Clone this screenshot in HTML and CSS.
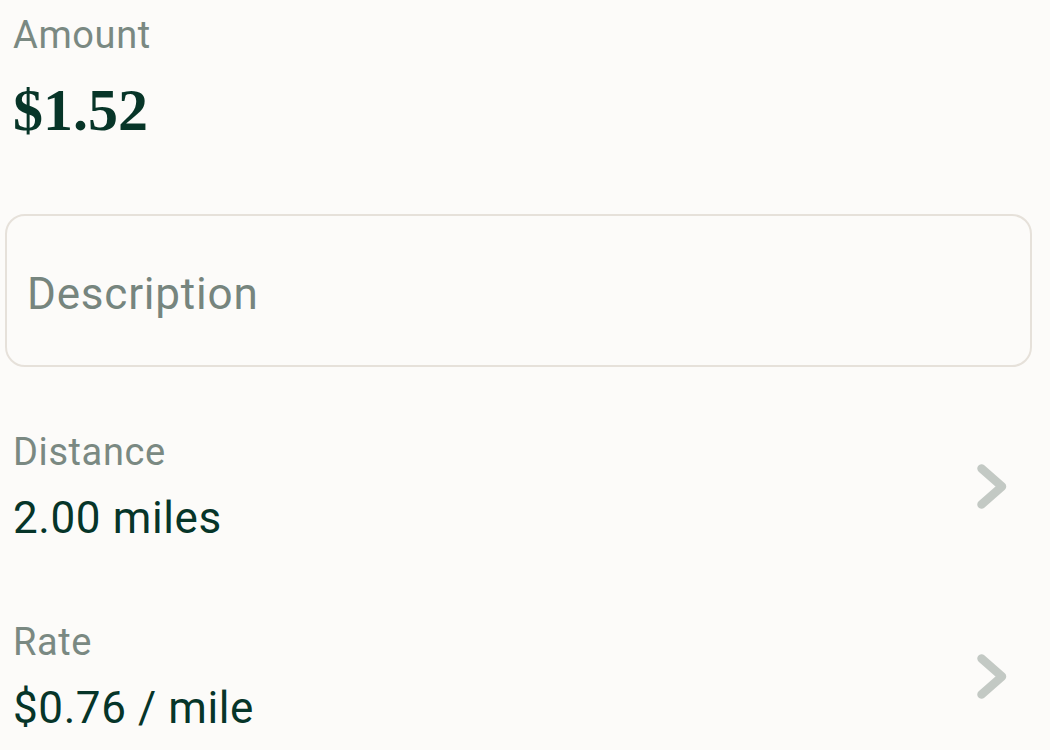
FILE: index.html
```html
<!DOCTYPE html>
<html>
<head>
<meta charset="utf-8">
<link rel="stylesheet" href="styles.css">
</head>
<body>
<main class="page">
  <section class="amount">
    <div class="label">Amount</div>
    <div class="amount-value">$1.52</div>
  </section>
  <div class="input-box">
    <span class="placeholder">Description</span>
  </div>
  <div class="row row-first">
    <div class="row-text">
      <div class="label">Distance</div>
      <div class="value">2.00 miles</div>
    </div>
    <svg class="chevron" width="30" height="46" viewBox="0 0 30 46"><polyline points="4.5,4.5 25,22.5 4.5,40.5" fill="none" stroke="#c3c9c4" stroke-width="8.5" stroke-linecap="round" stroke-linejoin="round"/></svg>
  </div>
  <div class="row row-second">
    <div class="row-text">
      <div class="label">Rate</div>
      <div class="value">$0.76 / mile</div>
    </div>
    <svg class="chevron" width="30" height="46" viewBox="0 0 30 46"><polyline points="4.5,4.5 25,22.5 4.5,40.5" fill="none" stroke="#c3c9c4" stroke-width="8.5" stroke-linecap="round" stroke-linejoin="round"/></svg>
  </div>
</main>
</body>
</html>
```

FILE: styles.css
```css
html, body {
  margin: 0;
  padding: 0;
  background: #fcfbf9;
}
body {
  font-family: Roboto, "Liberation Sans", sans-serif;
  color: #063529;
  width: 1050px;
  height: 750px;
  overflow: hidden;
}
.page {
  padding-top: 12px;
  display: flex;
  flex-direction: column;
}
.amount {
  padding-left: 13px;
  display: flex;
  flex-direction: column;
  gap: 17px;
}
.label {
  font-size: 38px;
  line-height: 46px;
  letter-spacing: 0.6px;
  color: #7a8982;
}
.amount-value {
  font-family: "Liberation Serif", serif;
  font-weight: bold;
  font-size: 60px;
  line-height: 70px;
  color: #073528;
}
.input-box {
  margin: 69px 18px 0 5px;
  height: 153px;
  box-sizing: border-box;
  border: 2px solid #e6e1da;
  border-radius: 20px;
  padding: 52px 20px 45px;
}
.placeholder {
  display: block;
  font-size: 44px;
  line-height: 52px;
  letter-spacing: 0.8px;
  color: #76857e;
}
.row {
  display: flex;
  align-items: center;
  justify-content: space-between;
  padding: 0 43px 0 13px;
}
.row-first {
  margin-top: 62px;
}
.row-second {
  margin-top: 75px;
}
.row-text {
  display: flex;
  flex-direction: column;
  gap: 17px;
}
.value {
  font-size: 44px;
  line-height: 52px;
  letter-spacing: 0.6px;
  color: #063529;
}
.chevron {
  display: block;
  flex: none;
}
```
